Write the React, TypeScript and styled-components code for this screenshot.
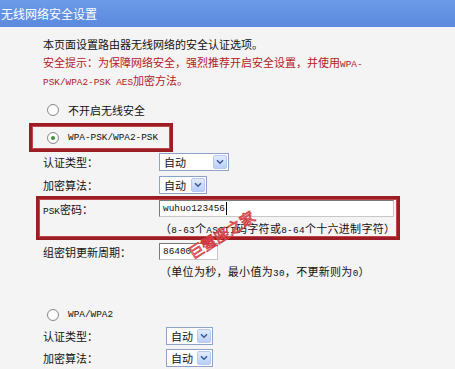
import styled, { createGlobalStyle } from "styled-components";

const GlobalStyle = createGlobalStyle`
  html, body {
    margin: 0;
    padding: 0;
    background: #f4f4f4;
  }
  body {
    font-family: "Noto Sans CJK SC", "Liberation Sans", sans-serif;
    font-size: 11px;
    color: #111;
  }
`;

const Page = styled.div`
  position: relative;
  width: 455px;
  height: 369px;
  overflow: hidden;
  background: #f4f4f4;
`;

const Header = styled.div`
  height: 27px;
  line-height: 27px;
  padding-left: 1px;
  color: #fff;
  font-size: 12px;
  background: linear-gradient(#6c9be9, #5b89de);
`;

const Body = styled.div`
  padding: 8px 0 0 43px;
`;

const Intro = styled.div`
  line-height: 18px;
  & > div {
    height: 18px;
    white-space: nowrap;
  }
`;

const Warn = styled.div`
  color: #b3201f;
`;

const Mono = styled.span`
  font-family: "Liberation Mono", monospace;
  font-size: 9.4px;
  line-height: 1;
`;

const RadioRow = styled.div<{ $top?: number }>`
  display: flex;
  align-items: center;
  height: 18px;
  margin-top: ${(p) => p.$top ?? 0}px;
  padding-left: 4px;
`;

const Radio = styled.span<{ $checked?: boolean }>`
  box-sizing: border-box;
  width: 12px;
  height: 12px;
  border-radius: 50%;
  border: 1px solid #8a8a8a;
  background: radial-gradient(circle, #fff 55%, #e4e4e4);
  margin-right: 9px;
  display: flex;
  align-items: center;
  justify-content: center;
  &::after {
    content: "";
    display: ${(p) => (p.$checked ? "block" : "none")};
    width: 4px;
    height: 4px;
    border-radius: 50%;
    background: #3f8f3a;
  }
`;

const Highlight = styled.div<{ $left: number; $width: number; $top: number }>`
  box-sizing: border-box;
  width: ${(p) => p.$width}px;
  margin-left: ${(p) => -p.$left}px;
  margin-top: ${(p) => p.$top}px;
  padding-left: ${(p) => p.$left - 3}px;
  border: 3px solid #9c1d24;
  box-shadow: inset 0 0 0 1px #c2474b;
`;

const BoxOne = styled(Highlight)`
  height: 29px;
  padding-top: 3px;
`;

const BoxTwo = styled(Highlight)`
  height: 44px;
  padding-top: 1px;
`;

const FormRow = styled.div<{ $label: number; $h: number; $top?: number }>`
  display: grid;
  grid-template-columns: ${(p) => p.$label}px auto;
  align-items: center;
  height: ${(p) => p.$h}px;
  margin-top: ${(p) => p.$top ?? 0}px;
`;

const Label = styled.span`
  white-space: nowrap;
  line-height: 16px;
`;

const Select = styled.div<{ $w: number }>`
  box-sizing: border-box;
  width: ${(p) => p.$w}px;
  height: 18px;
  border: 1px solid #8da2c4;
  background: #fff;
  display: flex;
  align-items: center;
  justify-content: space-between;
  padding: 0 1px 0 4px;
`;

const Arrow = styled.span`
  box-sizing: border-box;
  width: 14px;
  height: 14px;
  border: 1px solid #b7c9ef;
  border-radius: 2px;
  background: linear-gradient(#e2ebfd, #b9cff8);
  display: flex;
  align-items: center;
  justify-content: center;
`;

const TextInput = styled.div<{ $w: number }>`
  box-sizing: border-box;
  width: ${(p) => p.$w}px;
  height: 17px;
  border: 1px solid #7b7b7b;
  border-right-color: #c8c8c8;
  border-bottom-color: #c8c8c8;
  background: #fff;
  display: flex;
  align-items: center;
  padding-left: 3px;
`;

const Caret = styled.span`
  width: 1px;
  height: 13px;
  background: #000;
  margin-left: 1px;
`;

const Hint = styled.div<{ $top: number }>`
  margin-left: 117px;
  margin-top: ${(p) => p.$top}px;
  height: 18px;
  line-height: 18px;
  white-space: nowrap;
  letter-spacing: 0.3px;
`;

const Watermark = styled.div`
  position: absolute;
  left: 195px;
  top: 243px;
  height: 20px;
  line-height: 20px;
  font-size: 15px;
  font-family: "Noto Sans CJK SC", sans-serif;
  color: rgba(255, 240, 240, 0.5);
  -webkit-text-stroke: 0.8px #d2383d;
  transform: rotate(-32deg);
  transform-origin: 0 20px;
  white-space: nowrap;
`;

function DropDown({ width }: { width: number }) {
  return (
    <Select $w={width}>
      <span>自动</span>
      <Arrow>
        <svg width="8" height="6" viewBox="0 0 8 6">
          <path d="M1 1.2 L4 4.2 L7 1.2" fill="none" stroke="#3d5a93" strokeWidth="1.6" />
        </svg>
      </Arrow>
    </Select>
  );
}

export default function App() {
  return (
    <Page>
      <GlobalStyle />
      <Header>无线网络安全设置</Header>
      <Body>
        <Intro>
          <div>本页面设置路由器无线网络的安全认证选项。</div>
          <Warn>
            安全提示：为保障网络安全，强烈推荐开启安全设置，并使用<Mono>WPA-</Mono>
          </Warn>
          <Warn>
            <Mono>PSK/WPA2-PSK AES</Mono>加密方法。
          </Warn>
        </Intro>

        <RadioRow $top={12}>
          <Radio />
          不开启无线安全
        </RadioRow>

        <BoxOne $left={14} $width={144} $top={4}>
          <RadioRow>
            <Radio $checked />
            <Mono>WPA-PSK/WPA2-PSK</Mono>
          </RadioRow>
        </BoxOne>

        <FormRow $label={116} $h={20}>
          <Label>认证类型：</Label>
          <DropDown width={70} />
        </FormRow>
        <FormRow $label={116} $h={20} $top={3}>
          <Label>加密算法：</Label>
          <DropDown width={48} />
        </FormRow>

        <BoxTwo $left={7} $width={364} $top={1}>
          <FormRow $label={116} $h={17}>
            <Label>
              <Mono>PSK</Mono>密码：
            </Label>
            <TextInput $w={235}>
              <Mono>wuhuo123456</Mono>
              <Caret />
            </TextInput>
          </FormRow>
          <Hint $top={2}>
            （<Mono>8-63</Mono>个<Mono>ASCII</Mono>码字符或<Mono>8-64</Mono>个十六进制字符）
          </Hint>
        </BoxTwo>

        <FormRow $label={116} $h={17} $top={3}>
          <Label>组密钥更新周期：</Label>
          <TextInput $w={59}>
            <Mono>86400</Mono>
          </TextInput>
        </FormRow>
        <Hint $top={2}>
          （单位为秒，最小值为<Mono>30</Mono>，不更新则为<Mono>0</Mono>）
        </Hint>

        <RadioRow $top={26}>
          <Radio />
          <Mono>WPA/WPA2</Mono>
        </RadioRow>
        <FormRow $label={123} $h={20} $top={2}>
          <Label>认证类型：</Label>
          <DropDown width={47} />
        </FormRow>
        <FormRow $label={123} $h={20} $top={2}>
          <Label>加密算法：</Label>
          <DropDown width={47} />
        </FormRow>
      </Body>
      <Watermark>巨蟹座之家</Watermark>
    </Page>
  );
}
